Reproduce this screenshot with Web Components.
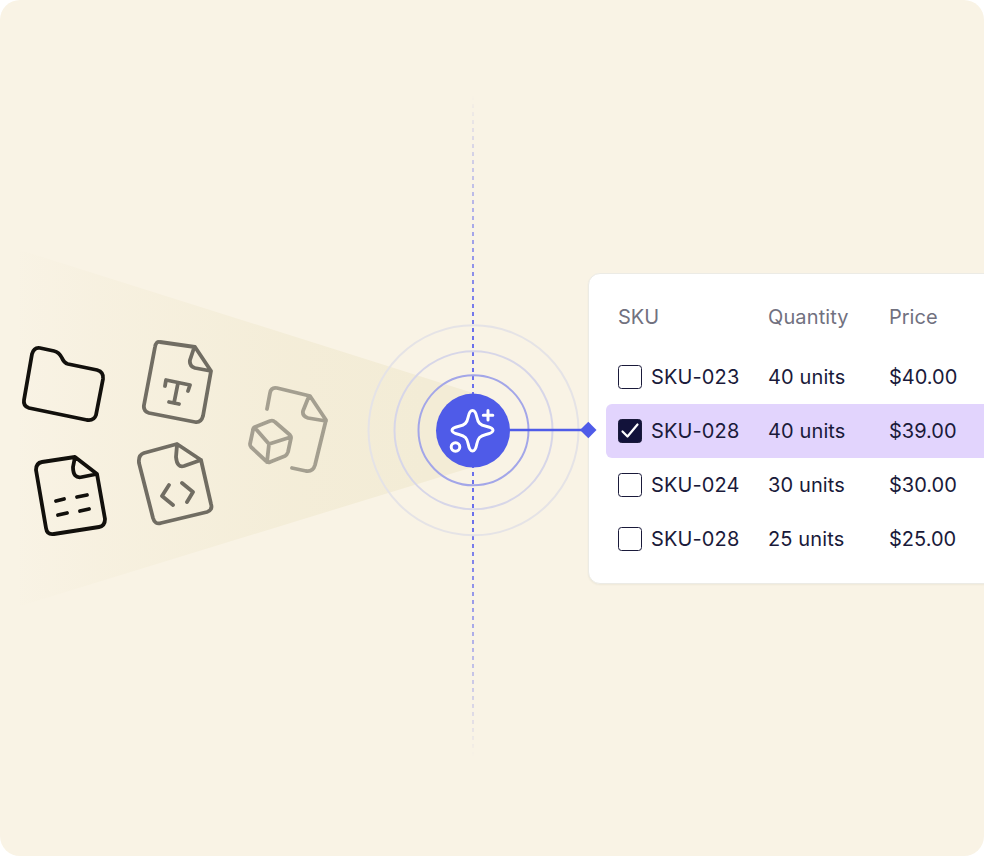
<!DOCTYPE html>
<html lang="en">
<head>
<meta charset="utf-8">
<title>SKU extraction</title>
<style>
  html, body { margin: 0; background: #fff; }
</style>
</head>
<body>
<ai-scene>
  <doc-icon kind="folder" style="opacity:1"></doc-icon>
  <doc-icon kind="text" style="opacity:.58"></doc-icon>
  <doc-icon kind="data" style="opacity:1"></doc-icon>
  <doc-icon kind="code" style="opacity:.58"></doc-icon>
  <doc-icon kind="cube" style="opacity:.35"></doc-icon>
  <sku-table slot="table">
    <sku-row sku="SKU-023" qty="40 units" price="$40.00"></sku-row>
    <sku-row sku="SKU-028" qty="40 units" price="$39.00" selected></sku-row>
    <sku-row sku="SKU-024" qty="30 units" price="$30.00"></sku-row>
    <sku-row sku="SKU-028" qty="25 units" price="$25.00"></sku-row>
  </sku-table>
  <signal-hub></signal-hub>
</ai-scene>

<script>
class AiScene extends HTMLElement {
    constructor() {
        super();
        this.attachShadow({ mode: 'open' }).innerHTML = /*html*/ `
            <style>
                :host {
                    display: block;
                    position: relative;
                    width: 984px;
                    height: 856px;
                    box-sizing: border-box;
                    padding: 273px 0 0 588px;
                    overflow: hidden;
                    border-radius: 20px;
                    background: #f9f3e5;
                    font-family: Inter, "Liberation Sans", sans-serif;
                }
                .beam {
                    position: absolute;
                    left: 20px;
                    top: 250px;
                    width: 453px;
                    height: 356px;
                    clip-path: polygon(0 0, 100% 143px, 100% 217px, 0 100%);
                    background: linear-gradient(90deg, rgba(243,236,214,.03) 0%, rgba(243,236,214,.35) 18%, rgba(243,236,214,.85) 60%, #f3ecd6 90%);
                }
            </style>
            <div class="beam"></div>
            <slot name="table"></slot>
            <slot></slot>
        `;
    }
}

// paths are written in page coordinates, the viewBox of each icon is its place on the canvas
const DOC_ICONS = {
    folder: {
        box: [16, 340, 96, 90],
        d: 'M32 354 L24 400 Q23 406 29 408 L87 420 Q94 421 96 415 L103 379 Q104 372 97 370 L68 364 Q64 363 62 358 Q59 352 54 351 L40 348 Q34 347 32 354 Z'
    },
    text: {
        box: [136, 335, 82, 95],
        d: 'M155 347 L144 405 Q143 411 149 413 L195 422 Q201 423 203 416 L211 371 L195 347 L160 342 Q156 341 155 347 Z M194 348 L190 360 Q189 366 195 368 L211 371 M165 386 L166 380 L190 385 L188 391 M178 383 L174 403 M169 402 L179 404'
    },
    data: {
        box: [30, 450, 82, 92],
        d: 'M36 470 L46 528 Q47 535 54 534 L99 527 Q105 526 105 519 L97 474 L75 457 L42 462 Q36 463 36 470 Z M75 457 L73 467 Q73 479 82 477 L97 474 M56 501 L64 499 M77 497 L87 495 M58 515 L67 513 M80 511 L89 509'
    },
    code: {
        box: [132, 438, 86, 92],
        d: 'M139 463 L153 518 Q155 525 161 523 L207 512 Q213 510 211 504 L201 460 L177 444 L144 453 Q138 455 139 463 Z M177 445 L176 457 Q177 468 184 466 L201 460 M169 485 L162 496 L173 505 M182 483 L193 492 L187 502'
    },
    cube: {
        box: [244, 382, 88, 96],
        d: 'M267 409 L270 393 Q271 387 277 388 L310 396 L326 420 L315 465 Q313 472 306 471 L292 468 M309 396 L303 411 Q302 416 308 418 L326 421 M255 427 L270 421 Q273 420 275 422 L290 435 Q291 436 291 438 L288 452 Q287 455 285 456 L270 462 Q268 463 266 461 L251 447 Q250 446 250 444 L253 430 Q253 428 255 427 Z M255 428 L269 444 L291 437 M269 444 L267 462'
    }
};

class DocIcon extends HTMLElement {
    constructor() {
        super();
        const icon = DOC_ICONS[this.getAttribute('kind')];
        const [x, y, w, h] = icon.box;
        this.attachShadow({ mode: 'open' }).innerHTML = /*html*/ `
            <style>
                :host {
                    position: absolute;
                    left: ${x}px;
                    top: ${y}px;
                    width: ${w}px;
                    height: ${h}px;
                }
                svg { display: block; }
            </style>
            <svg width="${w}" height="${h}" viewBox="${x} ${y} ${w} ${h}" fill="none" stroke="#12100c"
                 stroke-width="3.8" stroke-linecap="round" stroke-linejoin="round">
                <path d="${icon.d}"/>
            </svg>
        `;
    }
}

class SignalHub extends HTMLElement {
    constructor() {
        super();
        this.attachShadow({ mode: 'open' }).innerHTML = /*html*/ `
            <style>
                :host {
                    position: absolute;
                    left: 0;
                    top: 0;
                    width: 620px;
                    height: 856px;
                }
                .axis {
                    position: absolute;
                    left: 472px;
                    top: 96px;
                    width: 2px;
                    height: 660px;
                    background: repeating-linear-gradient(180deg, #6b6fec 0 4px, transparent 4px 8px);
                    -webkit-mask-image: linear-gradient(180deg, transparent 0, #000 35%, #000 65%, transparent 100%);
                    mask-image: linear-gradient(180deg, transparent 0, #000 35%, #000 65%, transparent 100%);
                }
                svg { position: absolute; left: 0; top: 0; }
            </style>
            <div class="axis"></div>
            <svg width="620" height="856" viewBox="0 0 620 856" fill="none">
                <circle cx="473.500" cy="430.300" r="105" stroke="#e5e3e6" stroke-width="2"/>
                <circle cx="473.500" cy="430.300" r="79" stroke="#d7d6e8" stroke-width="2"/>
                <circle cx="473.500" cy="430.300" r="55" stroke="#a3a6e8" stroke-width="2"/>
                <path d="M505 430 H588" stroke="#4f5be8" stroke-width="2.600"/>
                <path d="M588.300 421.800 L596.500 430 L588.300 438.200 L580 430 Z" fill="#4f5be8"/>
                <circle cx="473" cy="430.600" r="37" fill="#4f5be8"/>
                <g stroke="#fff" stroke-width="3" stroke-linecap="round" stroke-linejoin="round">
                    <path d="M472.500 410.500 C475 410.500 476 413 476.800 417 C478 423 480 425 486 426.300 C490.500 427.300 493 428.300 493 430.300 C493 432.500 490.500 433.500 486 434.500 C480 436 478 438 476.800 444 C476 448.500 475 451 472.500 451 C470 451 469 448.500 468.200 444 C467 438 465 436 459 434.500 C454.500 433.500 452 432.500 452 430.300 C452 428.300 454.500 427.300 459 426.300 C465 425 467 423 468.200 417 C469 413 470 410.500 472.500 410.500 Z"/>
                    <path d="M488 410.500 V420 M483.300 415.200 H492.800"/>
                    <circle cx="455.500" cy="447" r="4.300"/>
                </g>
            </svg>
        `;
    }
}

class SkuTable extends HTMLElement {
    constructor() {
        super();
        this.attachShadow({ mode: 'open' }).innerHTML = /*html*/ `
            <style>
                :host {
                    display: block;
                    box-sizing: border-box;
                    width: 430px;
                    height: 311px;
                    padding: 0 0 0 17px;
                    background: #fff;
                    border: 1px solid #ecebe5;
                    border-radius: 12px;
                    box-shadow: 0 1px 2px rgba(40, 30, 10, .05);
                    color: #1a1a3a;
                    font-size: 20px;
                }
                .head {
                    display: grid;
                    grid-template-columns: 150px 121px 1fr;
                    align-items: center;
                    height: 76.400px;
                    padding: 10px 0 0 12px;
                    box-sizing: border-box;
                    color: #71717f;
                }
                .wide { letter-spacing: .12px; }
            </style>
            <div class="head"><span>SKU</span><span class="wide">Quantity</span><span>Price</span></div>
            <slot></slot>
        `;
    }
}

class SkuRow extends HTMLElement {
    constructor() {
        super();
        const selected = this.hasAttribute('selected');
        this.attachShadow({ mode: 'open' }).innerHTML = /*html*/ `
            <style>
                :host {
                    display: grid;
                    grid-template-columns: 150px 121px 1fr;
                    align-items: center;
                    height: 54px;
                    padding-left: 12px;
                    border-radius: 6px 0 0 6px;
                    ${selected ? 'background: #e2d4fd;' : ''}
                }
                .sku { display: flex; align-items: center; gap: 9px; }
                .wide { letter-spacing: .12px; }
                .box {
                    box-sizing: border-box;
                    width: 24px;
                    height: 24px;
                    border: 1.500px solid #1a1a3a;
                    border-radius: 3.500px;
                    background: ${selected ? '#12123a' : '#fff'};
                }
                svg { display: block; }
            </style>
            <div class="sku">
                <span class="box">${selected ? `
                    <svg width="21" height="21" viewBox="0 0 21 21" fill="none" stroke="#fff" stroke-width="2.200" stroke-linecap="round" stroke-linejoin="round">
                        <path d="M3.500 11.500 L8.500 16.500 L18.500 4.500"/>
                    </svg>` : ''}</span>
                <span class="wide">${this.getAttribute('sku')}</span>
            </div>
            <span class="wide">${this.getAttribute('qty')}</span>
            <span>${this.getAttribute('price')}</span>
        `;
    }
}

customElements.define('ai-scene', AiScene);
customElements.define('doc-icon', DocIcon);
customElements.define('signal-hub', SignalHub);
customElements.define('sku-table', SkuTable);
customElements.define('sku-row', SkuRow);
</script>
</body>
</html>
